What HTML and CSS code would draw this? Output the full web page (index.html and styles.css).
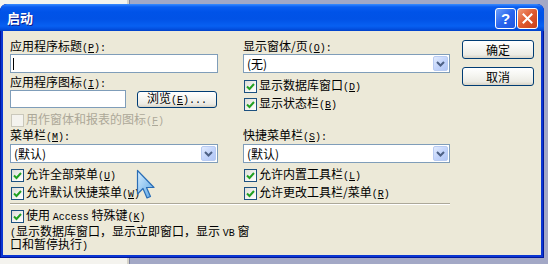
FILE: index.html
```html
<!DOCTYPE html>
<html lang="zh">
<head>
<meta charset="utf-8">
<title>启动</title>
<link rel="stylesheet" href="styles.css">
</head>
<body>
<div class="dialog">
  <div class="titlebar">
    <span class="title">启动</span>
    <span class="tb help">?</span>
    <span class="tb close"><svg width="11" height="11" viewBox="0 0 11 11"><path d="M1.5 1.5 L9.5 9.5 M9.5 1.5 L1.5 9.5" stroke="#fff" stroke-width="2" stroke-linecap="square"/></svg></span>
  </div>
  <div class="content">
    <div class="main">
      <div class="grid">
        <div class="col">
          <div class="lbl">应用程序标题<span class="k">(<u>P</u>):</span></div>
          <div class="field"><span class="caret"></span></div>
          <div class="lbl gap2">应用程序图标<span class="k">(<u>I</u>):</span></div>
          <div class="browse-row">
            <div class="field small"></div>
            <div class="btn browse"><span>浏览<span class="k">(<u>E</u>)...</span></span></div>
          </div>
          <div class="cbrow dis first">
            <span class="cb off"></span><span>用作窗体和报表的图标<span class="k">(<u>F</u>)</span></span>
          </div>
        </div>
        <div class="col">
          <div class="lbl">显示窗体/页<span class="k">(<u>O</u>):</span></div>
          <div class="select"><span>(无)</span><span class="drop"><svg width="9" height="6" viewBox="0 0 9 6"><path d="M1 1 L4.5 4.5 L8 1" fill="none" stroke="#4d6185" stroke-width="2"/></svg></span></div>
          <div class="cbrow first5">
            <span class="cb"><svg width="11" height="11" viewBox="0 0 11 11"><path d="M2 5.5 L4.5 8 L9 3" fill="none" stroke="#21a121" stroke-width="2"/></svg></span><span>显示数据库窗口<span class="k">(<u>D</u>)</span></span>
          </div>
          <div class="cbrow">
            <span class="cb"><svg width="11" height="11" viewBox="0 0 11 11"><path d="M2 5.5 L4.5 8 L9 3" fill="none" stroke="#21a121" stroke-width="2"/></svg></span><span>显示状态栏<span class="k">(<u>B</u>)</span></span>
          </div>
        </div>
        <div class="col">
          <div class="lbl">菜单栏<span class="k">(<u>M</u>):</span></div>
          <div class="select mt2"><span>(默认)</span><span class="drop"><svg width="9" height="6" viewBox="0 0 9 6"><path d="M1 1 L4.5 4.5 L8 1" fill="none" stroke="#4d6185" stroke-width="2"/></svg></span></div>
          <div class="cbrow first4">
            <span class="cb"><svg width="11" height="11" viewBox="0 0 11 11"><path d="M2 5.5 L4.5 8 L9 3" fill="none" stroke="#21a121" stroke-width="2"/></svg></span><span>允许全部菜单<span class="k">(<u>U</u>)</span></span>
          </div>
          <div class="cbrow">
            <span class="cb"><svg width="11" height="11" viewBox="0 0 11 11"><path d="M2 5.5 L4.5 8 L9 3" fill="none" stroke="#21a121" stroke-width="2"/></svg></span><span>允许默认快捷菜单<span class="k">(<u>W</u>)</span></span>
          </div>
        </div>
        <div class="col">
          <div class="lbl">快捷菜单栏<span class="k">(<u>S</u>):</span></div>
          <div class="select mt2"><span>(默认)</span><span class="drop"><svg width="9" height="6" viewBox="0 0 9 6"><path d="M1 1 L4.5 4.5 L8 1" fill="none" stroke="#4d6185" stroke-width="2"/></svg></span></div>
          <div class="cbrow first4">
            <span class="cb"><svg width="11" height="11" viewBox="0 0 11 11"><path d="M2 5.5 L4.5 8 L9 3" fill="none" stroke="#21a121" stroke-width="2"/></svg></span><span>允许内置工具栏<span class="k">(<u>L</u>)</span></span>
          </div>
          <div class="cbrow">
            <span class="cb"><svg width="11" height="11" viewBox="0 0 11 11"><path d="M2 5.5 L4.5 8 L9 3" fill="none" stroke="#21a121" stroke-width="2"/></svg></span><span>允许更改工具栏/菜单<span class="k">(<u>R</u>)</span></span>
          </div>
        </div>
      </div>
      <div class="sep"></div>
      <div class="cbrow first3">
        <span class="cb"><svg width="11" height="11" viewBox="0 0 11 11"><path d="M2 5.5 L4.5 8 L9 3" fill="none" stroke="#21a121" stroke-width="2"/></svg></span><span>使用 <span class="m">Access</span> 特殊键<span class="k">(<u>K</u>)</span></span>
      </div>
      <div class="note"><span class="m">(</span>显示数据库窗口，显示立即窗口，显示 <span class="m">VB</span> 窗</div>
      <div class="note">口和暂停执行<span class="m">)</span></div>
    </div>
    <div class="btns">
      <div class="btn">确定</div>
      <div class="btn">取消</div>
    </div>
  </div>
</div>
<svg class="cursor" width="22" height="34" viewBox="0 0 22 34">
  <defs>
    <linearGradient id="cg" x1="0" y1="0" x2="1" y2="1">
      <stop offset="0" stop-color="#d8eefe"/>
      <stop offset="1" stop-color="#5aa6e6"/>
    </linearGradient>
  </defs>
  <path d="M1.5 1.5 L1.5 25 L7 19.5 L11 29 L14.5 27.5 L10.5 18.5 L18 18.5 Z" fill="url(#cg)" stroke="#2a6db5" stroke-width="1.2" stroke-linejoin="round"/>
</svg>
</body>
</html>
```
FILE: styles.css
```css
* { box-sizing: border-box; }

body {
  margin: 0;
  width: 548px;
  height: 264px;
  overflow: hidden;
  position: relative;
  font: 12px "Noto Sans CJK SC", "Liberation Sans", sans-serif;
  color: #000;
  background: linear-gradient(to right,
    #f4f3ee 0, #f4f3ee 127px,
    #d6d3c9 127px, #d6d3c9 129px,
    #7d82a0 129px, #7d82a0 130px,
    #a3a8c6 130px);
}

.dialog {
  margin-top: 4px;
  width: 544px;
  height: 254px;
  background: #0a36d2;
  border-radius: 7px 7px 0 0;
  overflow: hidden;
  display: flex;
  flex-direction: column;
  box-shadow: inset 0 0 0 1px #00169c;
}

.titlebar {
  flex: none;
  height: 27px;
  display: flex;
  align-items: center;
  padding: 1px 6px 0 7px;
  background: linear-gradient(to bottom,
    #3a8cff 0, #0a5cf0 3px, #0053e8 8px, #0152e6 15px, #0760f2 22px, #0350e0 25px, #0040c8 27px);
}

.title {
  flex: 1;
  color: #fff;
  font-weight: bold;
  font-size: 13px;
  line-height: 16px;
  text-shadow: 1px 1px 0 #0c1c8c;
}

.tb {
  width: 21px;
  height: 21px;
  border: 1px solid #fff;
  border-radius: 3px;
  display: flex;
  align-items: center;
  justify-content: center;
}

.help {
  background: linear-gradient(135deg, #6ea0fa 0, #2a66ee 50%, #1d55e0 100%);
  color: #fff;
  font: bold 15px "Liberation Sans", sans-serif;
}

.close {
  margin-left: 1px;
  background: linear-gradient(135deg, #f09a78 0, #e0592f 50%, #c7401b 100%);
}

.content {
  flex: 1;
  margin: 0 3px 3px;
  background: #ece9d8;
  display: flex;
  padding: 8px 7px 0 7px;
}

.main {
  width: 440px;
  display: flex;
  flex-direction: column;
}

.grid {
  display: grid;
  grid-template-columns: 208px 207px;
  column-gap: 25px;
}

.col {
  display: flex;
  flex-direction: column;
}

.lbl {
  height: 14px;
  line-height: 14px;
  white-space: nowrap;
}

.gap2 { margin-top: 2px; }

.k {
  font-family: "Liberation Mono", monospace;
  font-size: 10px;
}

.m {
  font-family: "Liberation Mono", monospace;
  font-size: 10px;
}

.field {
  height: 19px;
  margin-top: 1px;
  border: 1px solid #7f9db9;
  background: #fff;
  display: flex;
  align-items: center;
  padding-left: 2px;
}

.caret {
  width: 1px;
  height: 12px;
  background: #000;
}

.browse-row {
  margin-top: 1px;
  height: 18px;
  display: flex;
  align-items: center;
}

.field.small {
  width: 116px;
  height: 18px;
  margin-top: 0;
}

.btn {
  border: 1px solid #003c74;
  border-radius: 3px;
  background: linear-gradient(to bottom, #ffffff 0, #f6f6f2 40%, #ecebe4 80%, #d8d3c6 100%);
  display: flex;
  align-items: center;
  justify-content: center;
  height: 19px;
  line-height: 14px;
  white-space: nowrap;
}

.browse {
  width: 80px;
  height: 17px;
  margin-left: 11px;
}

.select {
  height: 19px;
  margin-top: 1px;
  border: 1px solid #7f9db9;
  background: #fff;
  display: flex;
  align-items: center;
  padding: 0 1px 0 3px;
  line-height: 14px;
}

.select.mt2 { margin-top: 2px; }

.drop {
  margin-left: auto;
  width: 15px;
  height: 15px;
  border: 1px solid #b8cbf2;
  border-radius: 2px;
  background: linear-gradient(135deg, #e2ebfd 0, #c4d5fb 50%, #b1c6f6 100%);
  display: flex;
  align-items: center;
  justify-content: center;
}

.cbrow {
  height: 16px;
  margin-top: 2px;
  display: flex;
  align-items: center;
  white-space: nowrap;
  line-height: 14px;
}

.cbrow.first { margin-top: 4px; }
.cbrow.first5 { margin-top: 5px; }
.cbrow.first4 { margin-top: 4px; }
.cbrow.first3 { margin-top: 3px; }

.cb {
  flex: none;
  width: 13px;
  height: 13px;
  margin: 0 2px 0 1px;
  border: 1px solid #1c5180;
  background: linear-gradient(135deg, #dcdcd7 0, #f4f4f1 60%, #ffffff 100%);
  display: flex;
  align-items: center;
  justify-content: center;
}

.dis { color: #aca899; }

.cb.off {
  border-color: #cac8bb;
  background: #f4f3ee;
}

.sep {
  margin-top: 2px;
  height: 2px;
  border-top: 1px solid #aca899;
  border-bottom: 1px solid #ffffff;
}

.note {
  height: 13px;
  line-height: 13px;
  white-space: nowrap;
}

.btns {
  margin-left: 12px;
  width: 72px;
  padding-top: 1px;
  display: flex;
  flex-direction: column;
  gap: 8px;
}

.cursor {
  position: absolute;
  left: 136px;
  top: 169px;
}
```
